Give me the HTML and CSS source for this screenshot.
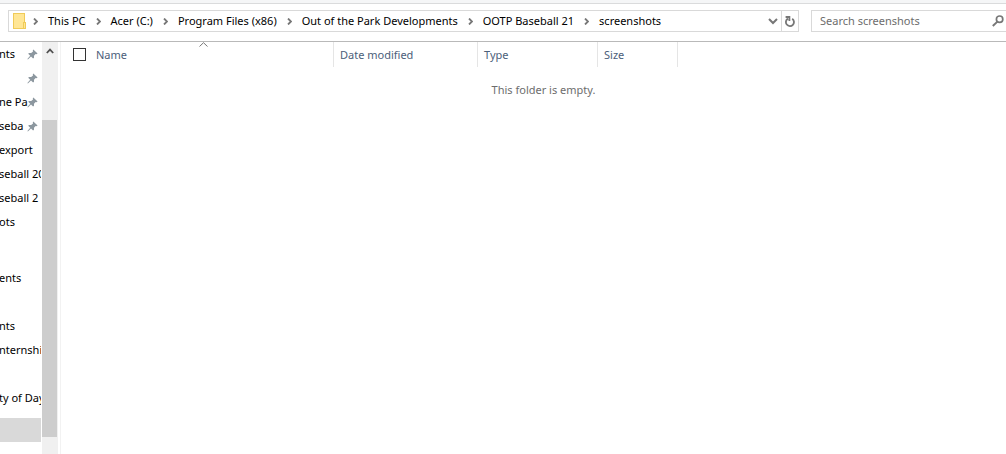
FILE: index.html
```
<!DOCTYPE html>
<html lang="en">
<head>
  <meta charset="UTF-8">
  <title>screenshots</title>
  <meta name="viewport" content="width=device-width, initial-scale=1">
  <link rel="stylesheet" href="styles.css">
</head>
<body>

  <!-- shared icons -->
  <svg class="sprite" aria-hidden="true">
    <symbol id="chevron" viewBox="0 0 5 7">
      <path d="M1 0.5 L4 3.5 L1 6.5" fill="none" stroke="#777" stroke-width="1.8"/>
    </symbol>
    <symbol id="pin" viewBox="0 0 11 11">
      <path d="M6.3 0.4 L10.6 4.6 L9.4 5.2 L8.6 5 L7 6.8 L7 8.8 L6.1 9.6 L4 7.6 L0.9 10.4 L0.4 10 L3.2 6.8 L1.2 4.8 L2 4 L4.2 4 L6 2.4 L5.8 1.2 Z" fill="#8c979f"/>
    </symbol>
  </svg>

  <div class="explorer">
    <div class="toolbar">
      <div class="address">
        <svg class="folder" width="14" height="16" viewBox="0 0 14 16" aria-hidden="true">
          <rect x="0.5" y="0.5" width="11" height="15" fill="#ffe695" stroke="#f0cb58"/>
          <rect x="10.5" y="9.5" width="2" height="6" fill="#ffe695" stroke="#f0cb58"/>
        </svg>
        <nav class="crumbs">
          <svg class="sep"><use href="#chevron"/></svg>
          <a href="#">This PC</a>
          <svg class="sep"><use href="#chevron"/></svg>
          <a href="#">Acer (C:)</a>
          <svg class="sep"><use href="#chevron"/></svg>
          <a href="#">Program Files (x86)</a>
          <svg class="sep"><use href="#chevron"/></svg>
          <a href="#">Out of the Park Developments</a>
          <svg class="sep"><use href="#chevron"/></svg>
          <a href="#">OOTP Baseball 21</a>
          <svg class="sep"><use href="#chevron"/></svg>
          <a href="#">screenshots</a>
        </nav>
        <button class="history" aria-label="Previous locations">
          <svg width="10" height="7" viewBox="0 0 10 7"><path d="M1 1 L5 5 L9 1" fill="none" stroke="#777" stroke-width="2"/></svg>
        </button>
        <button class="refresh" aria-label="Refresh">
          <svg width="10" height="11" viewBox="0 0 10 11"><path d="M7.2 2.8 A4 4 0 1 1 3 2.6 M0.6 1 H4.4 V5" fill="none" stroke="#777" stroke-width="1.8"/></svg>
        </button>
      </div>
      <div class="search">
        <input type="text" placeholder="Search screenshots" aria-label="Search screenshots">
        <svg width="12" height="12" viewBox="0 0 12 12" aria-hidden="true"><circle cx="7.6" cy="4.2" r="3.2" fill="none" stroke="#777" stroke-width="1.7"/><path d="M5.4 6.6 L0.8 11" stroke="#777" stroke-width="2"/></svg>
      </div>
    </div>

    <div class="content">
      <aside class="sidebar">
        <ul class="group">
          <li><span>nts</span><svg class="pin"><use href="#pin"/></svg></li>
          <li><span></span><svg class="pin"><use href="#pin"/></svg></li>
          <li><span>ne Pa</span><svg class="pin"><use href="#pin"/></svg></li>
          <li><span>seba</span><svg class="pin"><use href="#pin"/></svg></li>
          <li><span>export</span></li>
          <li><span>seball 20</span></li>
          <li><span>seball 2</span></li>
          <li><span>ots</span></li>
        </ul>
        <ul class="group">
          <li></li>
          <li><span>ents</span></li>
          <li></li>
          <li><span>nts</span></li>
          <li><span>nternship</span></li>
          <li></li>
          <li><span>ty of Day</span></li>
        </ul>
        <ul class="group">
          <li class="selected"></li>
        </ul>
      </aside>

      <div class="scrollbar">
        <button class="scroll-up" aria-label="Scroll up">
          <svg width="8" height="6" viewBox="0 0 8 6"><path d="M0.8 5 L4 1.6 L7.2 5" fill="none" stroke="#505050" stroke-width="1.8"/></svg>
        </button>
        <div class="thumb"></div>
      </div>

      <main class="files">
        <table>
          <thead>
            <tr>
              <th class="col-check"><input type="checkbox" aria-label="Select all"></th>
              <th class="col-name">Name
                <svg class="sort" width="9" height="5" viewBox="0 0 9 5"><path d="M0.5 4.5 L4.5 0.7 L8.5 4.5" fill="none" stroke="#777"/></svg>
              </th>
              <th class="col-date">Date modified</th>
              <th class="col-type">Type</th>
              <th class="col-size">Size</th>
            </tr>
          </thead>
        </table>
        <p class="empty">This folder is empty.</p>
      </main>
    </div>
  </div>

</body>
</html>
```
FILE: styles.css
```
:root {
  --border: #d9d9d9;
  --text: #000;
  --muted: #6d6d6d;
  --heading: #4c607a;
}

* {
  box-sizing: border-box;
}

body {
  margin: 0;
  overflow: hidden;
  background-color: #fff;
  color: var(--text);
  font-family: "Noto Sans", "Open Sans", sans-serif;
  font-size: 11px;
  line-height: 16px;
}

button {
  display: flex;
  align-items: center;
  justify-content: center;
  padding: 0;
  border: none;
  background: none;
}

.sprite {
  position: absolute;
  width: 0;
  height: 0;
}

/* the window runs past the right edge of the screen */
.explorer {
  display: flex;
  flex-direction: column;
  width: calc(100% + 20px);
  height: 100vh;
  border-top: 3px solid #f5f6f7;
}

.toolbar {
  display: flex;
  gap: 12px;
  padding: 6px 8px 9px;
  border-top: 1px solid #dadbdc;
  border-bottom: 1px solid #b9b9b9;
}

.address {
  display: flex;
  flex: 1;
  align-items: center;
  height: 22px;
  padding-left: 4px;
  border: 1px solid var(--border);
}

.folder {
  flex-shrink: 0;
}

.crumbs {
  display: flex;
  flex: 1;
  align-items: center;
  gap: 10px;
  padding-left: 6px;
  white-space: nowrap;
}

.crumbs a {
  color: var(--text);
  text-decoration: none;
}

.sep {
  flex-shrink: 0;
  width: 5px;
  height: 7px;
}

.history {
  width: 16px;
  height: 20px;
}

.refresh {
  width: 17px;
  height: 20px;
  border-left: 1px solid var(--border);
}

.search {
  display: flex;
  align-items: center;
  width: 207px;
  height: 22px;
  padding: 0 13px 0 8px;
  border: 1px solid var(--border);
}

.search input {
  flex: 1;
  min-width: 0;
  padding: 0;
  border: none;
  outline: none;
  font: inherit;
}

.search input::placeholder {
  color: var(--muted);
}

.content {
  display: flex;
  flex: 1;
  min-height: 0;
}

.sidebar {
  width: 41px;
  margin-right: 1px;
  overflow: hidden;
}

.group {
  margin: 0 0 8px;
  padding: 0;
  list-style: none;
}

.group li {
  display: flex;
  align-items: center;
  height: 24px;
  padding-right: 3px;
  white-space: nowrap;
}

/* the tree is scrolled slightly sideways */
.group span {
  flex: 1;
  min-width: 0;
  margin-left: -1px;
}

.pin {
  flex-shrink: 0;
  width: 11px;
  height: 11px;
}

.selected {
  background-color: var(--border);
}

.scrollbar {
  display: flex;
  flex-direction: column;
  width: 16px;
  padding-right: 1px;
  background-color: #f0f0f0;
}

.scroll-up {
  height: 18px;
}

.thumb {
  height: 77%;
  margin-top: 60px;
  background-color: #cdcdcd;
}

.files {
  flex: 1;
  margin-left: 2px;
  border-left: 1px solid #f2f2f2;
}

table {
  border-collapse: separate;
  border-spacing: 0;
  table-layout: fixed;
  width: 617px;
}

th {
  height: 25px;
  padding: 0 0 0 6px;
  border-right: 1px solid #e5e5e5;
  color: var(--heading);
  font-weight: normal;
  text-align: left;
}

.col-check {
  width: 29px;
  padding-left: 12px;
  border-right: none;
}

.col-check input {
  display: block;
  width: 13px;
  height: 13px;
  margin: 0;
  appearance: none;
  border: 1px solid #333;
}

.col-name {
  position: relative;
  width: 244px;
}

.col-date {
  width: 144px;
}

.col-type {
  width: 120px;
}

.sort {
  position: absolute;
  top: 0;
  left: 109px;
}

.empty {
  margin: 15px 0 0;
  color: var(--muted);
  text-align: center;
}
```
